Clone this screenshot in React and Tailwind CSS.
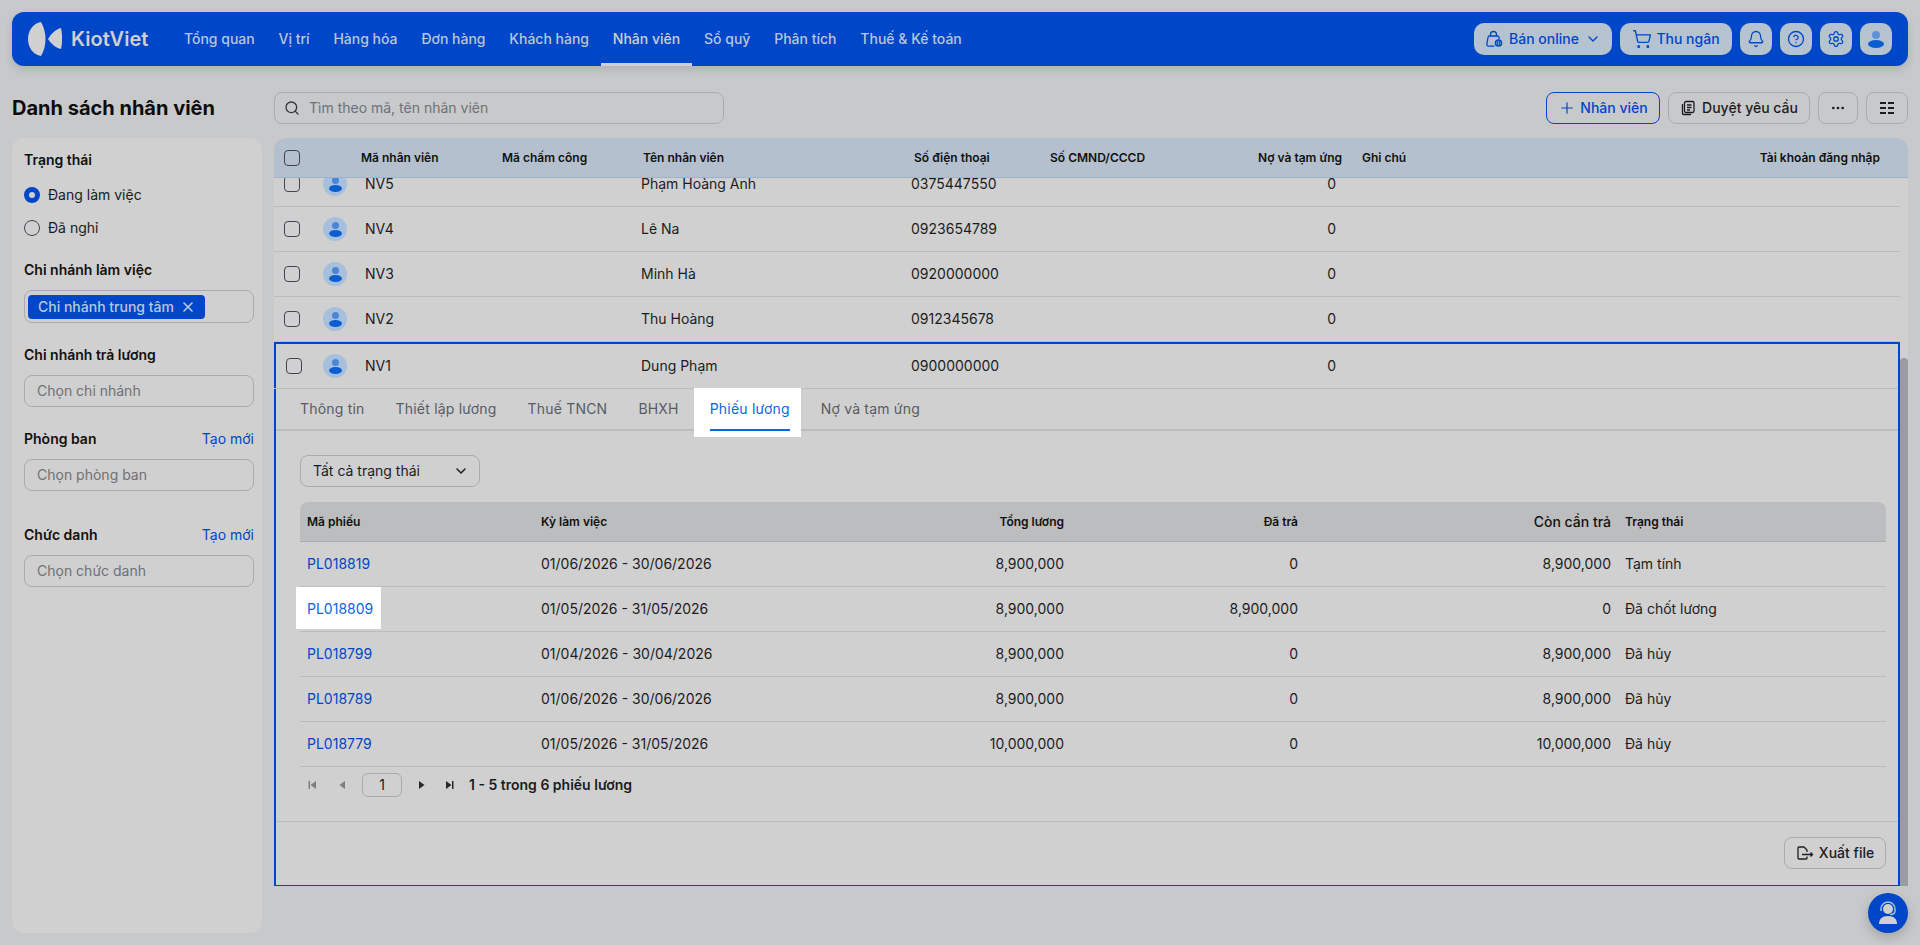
import React from "react";
import { Bell, ChevronDown, CircleHelp, Ellipsis, Plus, Search, Settings, ShoppingCart, X } from "lucide-react";

const navItems = ["Tổng quan", "Vị trí", "Hàng hóa", "Đơn hàng", "Khách hàng", "Nhân viên", "Sổ quỹ", "Phân tích", "Thuế & Kế toán"];

const staff = [
  { code: "NV5", name: "Phạm Hoàng Anh", phone: "0375447550" },
  { code: "NV4", name: "Lê Na", phone: "0923654789" },
  { code: "NV3", name: "Minh Hà", phone: "0920000000" },
  { code: "NV2", name: "Thu Hoàng", phone: "0912345678" },
];

const tabs = ["Thông tin", "Thiết lập lương", "Thuế TNCN", "BHXH", "Phiếu lương", "Nợ và tạm ứng"];

const payslips = [
  { id: "PL018819", period: "01/06/2026 - 30/06/2026", total: "8,900,000", paid: "0", due: "8,900,000", status: "Tạm tính" },
  { id: "PL018809", period: "01/05/2026 - 31/05/2026", total: "8,900,000", paid: "8,900,000", due: "0", status: "Đã chốt lương", lit: true },
  { id: "PL018799", period: "01/04/2026 - 30/04/2026", total: "8,900,000", paid: "0", due: "8,900,000", status: "Đã hủy" },
  { id: "PL018789", period: "01/06/2026 - 30/06/2026", total: "8,900,000", paid: "0", due: "8,900,000", status: "Đã hủy" },
  { id: "PL018779", period: "01/05/2026 - 31/05/2026", total: "10,000,000", paid: "0", due: "10,000,000", status: "Đã hủy" },
];

const Logo = () => (
  <svg width="34" height="34" viewBox="0 0 34 34" fill="#d0d0d0">
    <path d="M13 0C5 1 0 9 0 17c0 8 5 16 13 17 3-5 4.500-11 4.500-17S16 5 13 0Z" />
    <path d="M33 6c-5 1-10 6-13 11 3 5 8 9 13 10 1.500-7 1.500-14 0-21Z" />
  </svg>
);

const BagIcon = () => (
  <svg width="18" height="18" viewBox="0 0 18 18" fill="none" stroke="#0046c8" strokeWidth="1.3">
    <path d="M5.500 6V4.500a3 3 0 0 1 6 0V6" />
    <path d="M9.500 16.200H3.500c-1.100 0-1.900-.9-1.700-2L3 7.500C3.100 6.700 3.800 6 4.600 6h7.800c.8 0 1.500.7 1.600 1.500l.2 1.500" strokeLinejoin="round" />
    <circle cx="13.500" cy="13" r="3.800" fill="#0046c8" stroke="none" />
    <path d="M13.500 10.800v4.400M12 11.500c-.6 1-.6 2 0 3M15 11.500c.6 1 .6 2 0 3" stroke="#b5c2d0" strokeWidth="0.7" />
  </svg>
);

const RequestIcon = () => (
  <svg width="16" height="16" viewBox="0 0 16 16" fill="none" stroke="#1c1c1e" strokeWidth="1.300">
    <rect x="4.500" y="1.500" width="9.500" height="11" rx="1.500" />
    <path d="M2.500 4v9.500c0 .6.400 1 1 1H11M7 5h4.500M7 7.500h4.500M7 10h3" />
  </svg>
);

const ViewIcon = () => (
  <svg width="16" height="14" viewBox="0 0 16 14" fill="#1c1c1e">
    <rect x="1" y="1" width="6" height="2" />
    <rect x="9" y="1" width="6" height="2" />
    <rect x="1" y="6" width="6" height="2" />
    <rect x="9" y="6" width="6" height="2" />
    <rect x="1" y="11" width="6" height="2" />
    <rect x="9" y="11" width="6" height="2" />
  </svg>
);

const ExportIcon = () => (
  <svg width="18" height="16" viewBox="0 0 18 16" fill="none" stroke="#1c1c1e" strokeWidth="1.300" strokeLinejoin="round">
    <path d="M11 11.500V13c0 .6-.4 1-1 1H3c-.6 0-1-.4-1-1V3c0-.6.400-1 1-1h5l3 3v2" />
    <path d="M6 9.500h10.500M14.500 7.500l2 2-2 2" />
  </svg>
);

const ChatIcon = () => (
  <svg width="22" height="24" viewBox="0 0 22 24" fill="none">
    <circle cx="11" cy="8" r="5" fill="#d0d0d0" />
    <path d="M4 10V8a7 7 0 0 1 14 0v2c0 2-2 3.500-5 3.500" stroke="#a6bfdd" strokeWidth="1.500" />
    <path d="M2 23c0-5 3-8 9-8s9 3 9 8Z" fill="#d0d0d0" />
  </svg>
);

const PageIcon = ({ dir, edge, muted }) => (
  <svg width="10" height="10" viewBox="0 0 10 10" fill={muted ? "#7d7f83" : "#26282c"}>
    {dir === "left" ? <path d="M8 1v8L2.500 5Z" /> : <path d="M2 1v8l5.500-4Z" />}
    {edge && (dir === "left" ? <rect x="0.500" y="1" width="1.500" height="8" /> : <rect x="8" y="1" width="1.500" height="8" />)}
  </svg>
);

const Avatar = () => (
  <span className="flex h-6 w-6 flex-col items-center justify-center rounded-full bg-[#a6bfdd]">
    <span className="h-[7px] w-[7px] rounded-full bg-[#4a86d8]" />
    <span className="mt-px h-[7px] w-[13px] rounded-[50%] bg-[#0b5ed0]" />
  </span>
);

const Checkbox = () => <span className="block h-4 w-4 rounded-[4px] border border-[#3f4650]" />;

const NavButton = ({ children, className = "w-8" }) => (
  <button className={`flex h-8 items-center justify-center rounded-[10px] bg-[#b5c2d0] text-sm font-medium text-[#0046c8] ${className}`}>
    {children}
  </button>
);

const ToolButton = ({ children, className = "" }) => (
  <button className={`flex h-8 items-center justify-center rounded-lg border border-[#a9abae] text-sm font-medium text-[#1c1c1e] ${className}`}>
    {children}
  </button>
);

const Field = ({ label, action, placeholder, className = "" }) => (
  <div className={className}>
    <div className="flex h-5 items-center justify-between text-sm font-semibold text-[#111]">
      {label}
      {action && <span className="font-normal text-[#0046c8]">{action}</span>}
    </div>
    <div className="mt-[10px] flex h-8 items-center rounded-lg border border-[#a9abae] px-3 text-sm text-[#6d7178]">
      {placeholder}
    </div>
  </div>
);

const StaffRow = ({ code, name, phone, className = "" }) => (
  <div className={`flex h-[45px] items-center border-b border-[#bcbcbc] text-sm text-[#1c1c1e] ${className}`}>
    <div className="w-[49px] pl-[10px]">
      <Checkbox />
    </div>
    <div className="w-[42px]">
      <Avatar />
    </div>
    <div className="w-[276px]">{code}</div>
    <div className="w-[270px]">{name}</div>
    <div className="w-[425px] text-right">
      <span className="float-left">{phone}</span>0
    </div>
  </div>
);

const PayslipRow = ({ id, period, total, paid, due, status, lit }) => (
  <div className="flex h-[45px] items-center border-b border-[#bcbcbc] text-sm text-[#1c1c1e]">
    <div className="relative flex h-full w-[241px] items-center pl-[7px] text-[#0046c8]">
      {lit && <span className="absolute -left-1 top-0 h-[42px] w-[85px] bg-white" />}
      <span className={`relative ${lit ? "text-[#0b66e4]" : ""}`}>{id}</span>
    </div>
    <div className="w-[300px]">{period}</div>
    <div className="w-[223px] text-right">{total}</div>
    <div className="w-[234px] text-right">{paid}</div>
    <div className="w-[313px] text-right">{due}</div>
    <div className="ml-[14px]">{status}</div>
  </div>
);

const App = () => {
  return (
    <div className="relative h-[945px] w-full overflow-hidden bg-[#c8c9cb] p-3 font-['Inter',sans-serif]">
      <nav className="flex h-[54px] items-center rounded-xl bg-[#0046c8] pl-4 pr-4 shadow-[0_4px_10px_rgba(0,0,0,0.12)]">
        <Logo />
        <span className="ml-[9px] w-[101px] text-[20px] font-semibold text-[#d0d0d0]">KiotViet</span>
        <div className="flex h-full">
          {navItems.map((item) => (
            <a
              key={item}
              className={`flex h-full items-center whitespace-nowrap border-b-[3px] px-[11.92px] pt-[3px] text-sm font-medium ${
                item === "Nhân viên" ? "border-[#d0d0d0] text-[#d0d0d0]" : "border-transparent text-[#b9c6d8]"
              }`}
            >
              {item}
            </a>
          ))}
        </div>
        <div className="ml-auto flex items-center gap-2">
          <NavButton className="w-[138px] gap-[6px]">
            <BagIcon />
            Bán online
            <ChevronDown size={16} />
          </NavButton>
          <NavButton className="w-[112px] gap-1">
            <ShoppingCart size={20} strokeWidth={1.6} />
            Thu ngân
          </NavButton>
          <NavButton>
            <Bell size={18} strokeWidth={1.7} />
          </NavButton>
          <NavButton>
            <CircleHelp size={18} strokeWidth={1.7} />
          </NavButton>
          <NavButton>
            <Settings size={18} strokeWidth={1.7} />
          </NavButton>
          <NavButton className="w-8 flex-col">
            <span className="h-2 w-2 rounded-full bg-[#5f93d6]" />
            <span className="mt-px h-2 w-4 rounded-[50%] bg-[#0b5ed0]" />
          </NavButton>
        </div>
      </nav>

      <div className="mt-[26px] grid grid-cols-[250px_1fr] gap-x-3 gap-y-[14px]">
        <h1 className="flex h-8 items-center text-[20px] font-bold text-[#0d0d0d]">Danh sách nhân viên</h1>
        <div className="flex items-center">
          <div className="flex h-8 w-[450px] items-center gap-[9px] rounded-lg border border-[#a9abae] px-[9px] text-sm text-[#6d7178]">
            <Search size={16} className="text-[#33363b]" />
            Tìm theo mã, tên nhân viên
          </div>
          <div className="ml-auto flex gap-2">
            <ToolButton className="w-[114px] gap-1 !border-[#0046c8] !text-[#0046c8]">
              <Plus size={18} strokeWidth={1.6} />
              Nhân viên
            </ToolButton>
            <ToolButton className="w-[142px] gap-[6px]">
              <RequestIcon />
              Duyệt yêu cầu
            </ToolButton>
            <ToolButton className="w-10">
              <Ellipsis size={16} />
            </ToolButton>
            <ToolButton className="w-[42px]">
              <ViewIcon />
            </ToolButton>
          </div>
        </div>

        <aside className="h-[795px] rounded-xl bg-[#d0d0d0] pl-3 pr-2 pt-3">
          <div className="flex h-5 items-center text-sm font-semibold text-[#111]">Trạng thái</div>
          <label className="mt-[15px] flex h-5 items-center gap-2 text-sm text-[#1c1c1e]">
            <span className="h-4 w-4 rounded-full border-[5px] border-[#0046c8] bg-[#d0d0d0]" />
            Đang làm việc
          </label>
          <label className="mt-[13px] flex h-5 items-center gap-2 text-sm text-[#1c1c1e]">
            <span className="h-4 w-4 rounded-full border border-[#3f4650]" />
            Đã nghỉ
          </label>
          <div className="mt-[22px] flex h-5 items-center text-sm font-semibold text-[#111]">Chi nhánh làm việc</div>
          <div className="mt-[10px] flex h-[33px] items-center rounded-lg border border-[#a9abae] px-[3px]">
            <span className="flex h-6 w-[177px] items-center gap-[6px] rounded bg-[#0046c8] pl-[10px] text-sm font-medium text-[#b9c8dc]">
              Chi nhánh trung tâm
              <X size={16} strokeWidth={2.4} />
            </span>
          </div>
          <Field className="mt-[22px]" label="Chi nhánh trả lương" placeholder="Chọn chi nhánh" />
          <Field className="mt-[22px]" label="Phòng ban" action="Tạo mới" placeholder="Chọn phòng ban" />
          <Field className="mt-[34px]" label="Chức danh" action="Tạo mới" placeholder="Chọn chức danh" />
        </aside>

        <main className="flex h-[748px] flex-col self-start">
          <div className="flex h-10 shrink-0 items-center rounded-t-xl border-b border-[#9db3cc] bg-[#b4c0cd] text-xs font-semibold text-[#111]">
            <div className="w-[87px] pl-[10px]">
              <Checkbox />
            </div>
            <div className="w-[141px]">Mã nhân viên</div>
            <div className="w-[141px]">Mã chấm công</div>
            <div className="w-[271px]">Tên nhân viên</div>
            <div className="w-[136px]">Số điện thoại</div>
            <div className="w-[292px]">
              <div className="flex justify-between">
                <span>Số CMND/CCCD</span>
                <span>Nợ và tạm ứng</span>
              </div>
            </div>
            <div className="ml-5">Ghi chú</div>
            <div className="ml-auto pr-7">Tài khoản đăng nhập</div>
          </div>

          <div className="flex min-h-0 flex-1 bg-[#d0d0d0]">
            <div className="w-[1626px] overflow-hidden">
              {staff.map((row, i) => (
                <StaffRow key={row.code} {...row} className={i === 0 ? "-mt-[16px]" : ""} />
              ))}

              <section className="h-[544px] border-x-2 border-b border-t-2 border-[#0046c8]">
                <StaffRow code="NV1" name="Dung Phạm" phone="0900000000" className="-ml-[2px] [&>div:first-child]:pl-3" />
                <div className="flex h-[42px] border-b-2 border-[#bcbcbc] pl-3 text-sm tracking-[0.2px] text-[#565c66]">
                  {tabs.map((tab) => (
                    <div key={tab} className="relative flex h-[41px] items-center px-3 pb-[2px] [&+div]:ml-[7px]">
                      {tab === "Phiếu lương" && <span className="absolute -bottom-[7px] -left-1 -top-px right-px bg-white" />}
                      <span className={`relative ${tab === "Phiếu lương" ? "text-[#0b66e4]" : ""}`}>{tab}</span>
                      {tab === "Phiếu lương" && <span className="absolute -bottom-px left-3 right-3 h-[2px] bg-[#0b66e4]" />}
                    </div>
                  ))}
                </div>

                <div className="h-[391px] border-b border-[#bcbcbc] pl-6 pr-3 pt-6">
                  <div className="flex h-8 w-[180px] items-center justify-between rounded-lg border border-[#a9abae] pl-3 pr-[10px] text-sm text-[#1c1c1e]">
                    Tất cả trạng thái
                    <ChevronDown size={16} strokeWidth={2.2} />
                  </div>

                  <div className="mt-[15px] flex h-10 items-center rounded-t-lg border-b border-[#a9abae] bg-[#bcbdbf] text-xs font-semibold text-[#111]">
                    <div className="w-[241px] pl-[7px]">Mã phiếu</div>
                    <div className="w-[300px]">Kỳ làm việc</div>
                    <div className="w-[223px] text-right">Tổng lương</div>
                    <div className="w-[234px] text-right">Đã trả</div>
                    <div className="w-[313px] text-right text-sm font-medium">Còn cần trả</div>
                    <div className="ml-[14px]">Trạng thái</div>
                  </div>
                  {payslips.map((row) => (
                    <PayslipRow key={row.id} {...row} />
                  ))}

                  <div className="mt-[6px] flex h-6 items-center text-sm">
                    <div className="flex w-[62px] justify-between pl-2 pr-[15px]">
                      <PageIcon dir="left" edge muted />
                      <PageIcon dir="left" muted />
                    </div>
                    <div className="flex h-6 w-10 items-center justify-center rounded-md border border-[#a9abae] text-[#1c1c1e]">1</div>
                    <div className="flex w-[67px] justify-between pl-[15px] pr-[15px]">
                      <PageIcon dir="right" />
                      <PageIcon dir="right" edge />
                    </div>
                    <span className="font-semibold text-[#1c1c1e]">1 - 5 trong 6 phiếu lương</span>
                  </div>
                </div>

                <div className="flex justify-end pr-[12px] pt-[15px]">
                  <ToolButton className="w-[102px] gap-[5px]">
                    <ExportIcon />
                    Xuất file
                  </ToolButton>
                </div>
              </section>
            </div>

            <div className="flex w-2 flex-col justify-end">
              <div className="h-[528px] rounded-t-[4px] bg-[#999ca1]" />
            </div>
          </div>
        </main>
      </div>

      <button className="absolute bottom-3 right-3 flex h-10 w-10 items-center justify-center rounded-full bg-[#0046c8] shadow-[0_4px_12px_rgba(0,0,0,0.2)]">
        <ChatIcon />
      </button>
    </div>
  );
};

export default App;
